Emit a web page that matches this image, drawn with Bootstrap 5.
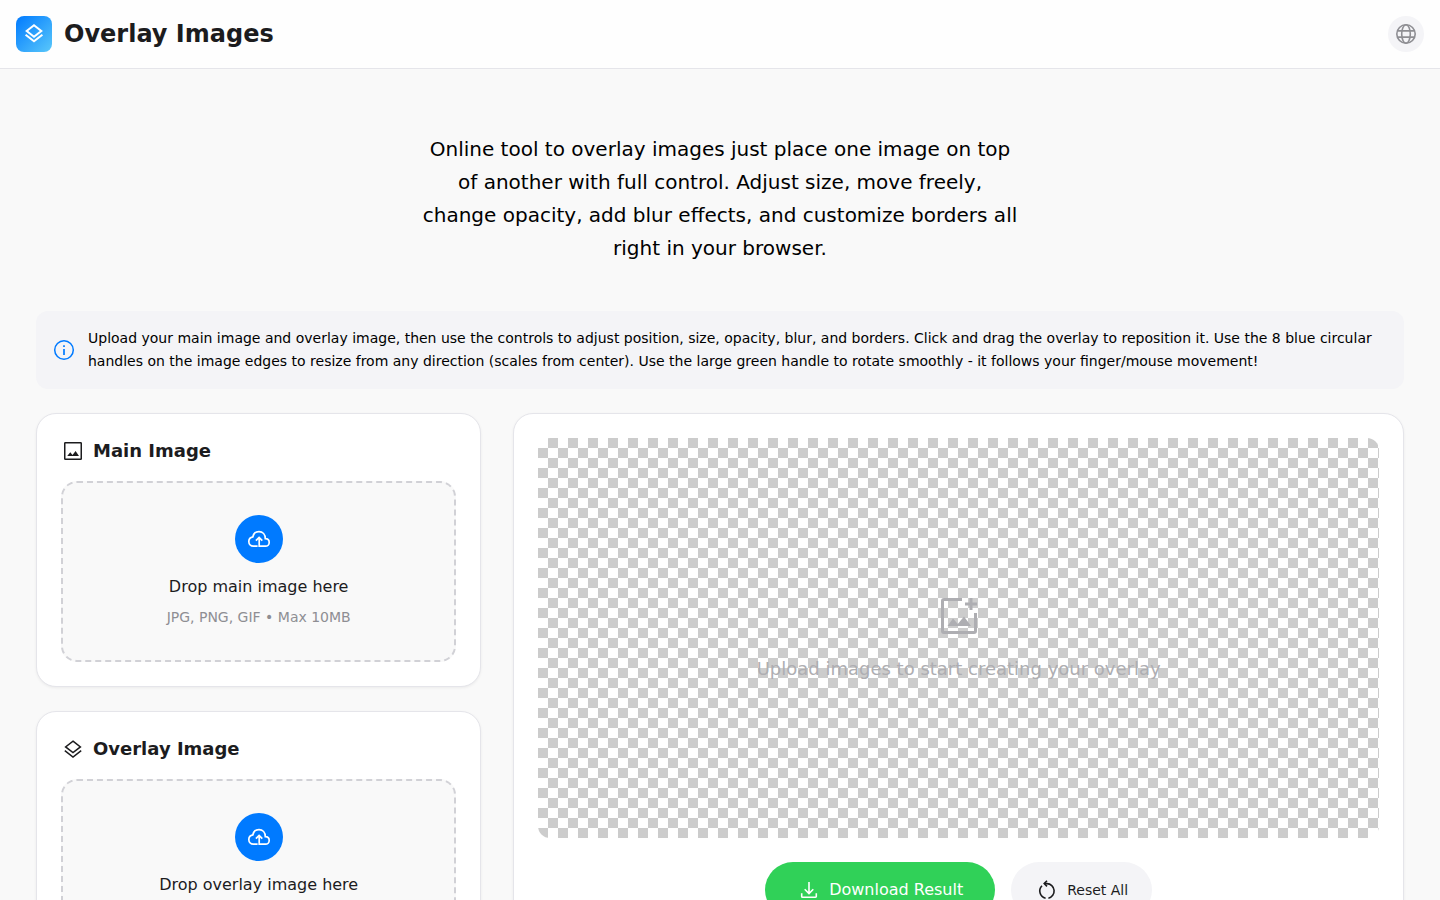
<!DOCTYPE html>
<html lang="en">
<head>
<meta charset="utf-8">
<meta name="viewport" content="width=device-width, initial-scale=1">
<title>Overlay Images</title>
<link href="https://cdn.jsdelivr.net/npm/bootstrap@5.3.0/dist/css/bootstrap.min.css" rel="stylesheet">
<style>
  body { font-family: "DejaVu Sans", sans-serif; background: #f9f9f9; color: #000; }
  svg { display: block; flex-shrink: 0; fill: none; stroke: currentColor; }
  .topbar { background: #fefefe; border-bottom: 1px solid #e5e5ea; }
  .app-icon { width: 36px; height: 36px; border-radius: 8px; background: linear-gradient(135deg, #007aff, #5ac8fa); }
  .app-title { font-size: 24px; line-height: 36px; font-weight: 700; color: #1c1c1e; }
  .lang-btn { width: 36px; height: 36px; background: #f4f4f7; color: #8e8e93; border: 0; }
  .page-wrap { max-width: 1400px; }
  .intro { max-width: 600px; font-size: 20px; line-height: 33px; padding-top: 64px; margin-bottom: 46px; }
  .info-bar { background: #f4f4f7; border-radius: 12px; font-size: 14px; line-height: 23px; }
  .info-bar svg { color: #007aff; }
  .workspace { grid-template-columns: 1fr; gap: 32px; }
  @media (min-width: 992px) { .workspace { grid-template-columns: 1fr 2fr; } }
  .panel { background: #fff; border: 1px solid #e5e5ea; border-radius: 20px; box-shadow: 0 1px 3px rgba(0,0,0,.06); }
  .panel-title { font-size: 18px; line-height: 26px; font-weight: 700; color: #1c1c1e; margin-bottom: 17px; }
  .dropzone { border: 2px dashed #d1d1d6; border-radius: 16px; background: #f9f9f9; padding: 32px; cursor: pointer; }
  .drop-icon { width: 48px; height: 48px; background: #007aff; color: #fff; margin-bottom: 12px; }
  .drop-text { font-size: 16px; line-height: 24px; color: #1c1c1e; }
  .drop-hint { font-size: 14px; line-height: 21px; color: #8e8e93; }
  .stage { height: 400px; border-radius: 12px; color: #aeaeb2; font-size: 18px; line-height: 28px;
    background: repeating-conic-gradient(#ccc 0 25%, #fff 0 50%) 0 0 / 20px 20px; }
  .stage-text { line-height: 26px; padding-bottom: 2px; }
  .pill { border: 0; border-radius: 28px; min-height: 56px; }
  .pill-save { background: #30d158; color: #fff; font-size: 16px; padding: 16px 32px; }
  .pill-reset { background: #f4f4f7; color: #1c1c1e; font-size: 14px; padding: 16px 24px; }
</style>
</head>
<body>
<header class="topbar d-flex align-items-center justify-content-between p-3">
  <div class="d-flex align-items-center">
    <span class="app-icon d-flex align-items-center justify-content-center text-white">
      <svg width="24" height="24" viewBox="0 0 24 24" stroke-width="2" aria-hidden="true"><path d="M12 3.300 19.300 9 12 14.700 4.700 9ZM3.600 12.800 12 19.300 20.400 12.800"/></svg>
    </span>
    <h1 class="app-title mb-0 ms-2 ps-1">Overlay Images</h1>
  </div>
  <button type="button" class="lang-btn rounded-circle p-0 d-flex align-items-center justify-content-center" aria-label="Language">
    <svg width="24" height="24" viewBox="0 0 24 24" stroke-width="1.6" aria-hidden="true"><circle cx="12" cy="12" r="9.2"/><ellipse cx="12" cy="12" rx="4.3" ry="9.2"/><path d="M3.300 8.900H20.700M3.300 15.100H20.700"/></svg>
  </button>
</header>

<main class="page-wrap mx-auto px-3 pb-4">
  <p class="intro mx-auto text-center">Online tool to overlay images just place one image on top of another with full control. Adjust size, move freely, change opacity, add blur effects, and customize borders all right in your browser.</p>

  <div class="info-bar d-flex align-items-center p-3 mb-4">
    <svg width="24" height="24" viewBox="0 0 24 24" stroke-width="1.500" aria-hidden="true"><circle cx="12" cy="12" r="9.300"/><path d="M12 11V17M12 7.200V8.900" stroke-width="1.700"/></svg>
    <p class="mb-0 ms-2 ps-1">Upload your main image and overlay image, then use the controls to adjust position, size, opacity, blur, and borders. Click and drag the overlay to reposition it. Use the 8 blue circular handles on the image edges to resize from any direction (scales from center). Use the large green handle to rotate smoothly - it follows your finger/mouse movement!</p>
  </div>

  <div class="workspace d-grid">
    <div class="d-flex flex-column gap-4">
      <section class="panel p-4">
        <h2 class="panel-title d-flex align-items-center gap-2">
          <svg width="24" height="24" viewBox="0 0 24 24" stroke-width="1.500" aria-hidden="true"><rect x="3.750" y="3.750" width="16.500" height="16.500" rx=".6"/><path d="M6.200 17 9.300 13.200 11.500 15.900 14.600 12 18 17Z" fill="currentColor" stroke="none"/></svg>
          Main Image
        </h2>
        <label class="dropzone d-flex flex-column align-items-center text-center" for="mainFile">
          <span class="drop-icon rounded-circle d-flex align-items-center justify-content-center">
            <svg width="24" height="24" viewBox="0 0 24 24" stroke-width="1.700" aria-hidden="true"><path d="M10.600 19.200H6.400A4.600 4.600 0 0 1 1.800 14.600C1.800 12.100 3.500 10.200 5.900 9.800C6.400 6.700 8.900 4.700 12 4.700C15.700 4.700 18.300 7.500 18.300 11.700C20.700 11.700 22.200 13.400 22.200 15.500A3.700 3.700 0 0 1 18.500 19.200H12.200V10.700M8.900 13.600 12.100 10.400 15.300 13.600"/></svg>
          </span>
          <span class="drop-text mb-2">Drop main image here</span>
          <span class="drop-hint">JPG, PNG, GIF • Max 10MB</span>
        </label>
        <input class="visually-hidden" type="file" id="mainFile" accept="image/*">
      </section>

      <section class="panel p-4">
        <h2 class="panel-title d-flex align-items-center gap-2">
          <svg width="24" height="24" viewBox="0 0 24 24" stroke-width="1.500" aria-hidden="true"><path d="M12 4.200 19.400 9.900 12 15.600 4.600 9.900ZM3.800 13.700 12 20 20.200 13.700"/></svg>
          Overlay Image
        </h2>
        <label class="dropzone d-flex flex-column align-items-center text-center" for="overlayFile">
          <span class="drop-icon rounded-circle d-flex align-items-center justify-content-center">
            <svg width="24" height="24" viewBox="0 0 24 24" stroke-width="1.700" aria-hidden="true"><path d="M10.600 19.200H6.400A4.600 4.600 0 0 1 1.800 14.600C1.800 12.100 3.500 10.200 5.900 9.800C6.400 6.700 8.900 4.700 12 4.700C15.700 4.700 18.300 7.500 18.300 11.700C20.700 11.700 22.200 13.400 22.200 15.500A3.700 3.700 0 0 1 18.500 19.200H12.200V10.700M8.900 13.600 12.100 10.400 15.300 13.600"/></svg>
          </span>
          <span class="drop-text mb-2">Drop overlay image here</span>
          <span class="drop-hint">JPG, PNG, GIF • Max 10MB</span>
        </label>
        <input class="visually-hidden" type="file" id="overlayFile" accept="image/*">
      </section>
    </div>

    <section class="panel p-4">
      <div class="stage d-flex flex-column align-items-center justify-content-center text-center mb-4">
        <svg class="mb-3" width="48" height="48" viewBox="0 0 48 48" stroke-width="3" aria-hidden="true"><path d="M27 7.500H9A1.500 1.500 0 0 0 7.500 9V39A1.500 1.500 0 0 0 9 40.500H39A1.500 1.500 0 0 0 40.500 39V21"/><path d="M36 6V18M30 12H42"/><path d="M12.500 34 18 26.500 22.800 32 29 24.500 36 34Z" fill="currentColor" stroke="none"/></svg>
        <span class="stage-text">Upload images to start creating your overlay</span>
      </div>
      <div class="d-flex flex-wrap justify-content-center gap-3">
        <button type="button" class="pill pill-save d-flex align-items-center gap-2">
          <svg width="24" height="24" viewBox="0 0 24 24" stroke-width="1.600" aria-hidden="true"><path d="M12 4V15.500M7.700 11.200 12 15.500 16.300 11.200M4.700 15.200V18.400A.8.8 0 0 0 5.500 19.200H18.500A.8.8 0 0 0 19.300 18.400V15.200"/></svg>
          Download Result
        </button>
        <button type="button" class="pill pill-reset d-flex align-items-center gap-2">
          <svg width="24" height="24" viewBox="0 0 24 24" stroke-width="1.600" aria-hidden="true"><path d="M10.600 20.200A7.400 7.400 0 0 1 7 7.700M9.500 5.600H12A7.400 7.400 0 0 1 13.400 20.200"/><path d="M12 2.800 9.200 5.600 12 8.400"/></svg>
          Reset All
        </button>
      </div>
    </section>
  </div>
</main>
<script src="https://cdn.jsdelivr.net/npm/bootstrap@5.3.0/dist/js/bootstrap.bundle.min.js"></script>
</body>
</html>
